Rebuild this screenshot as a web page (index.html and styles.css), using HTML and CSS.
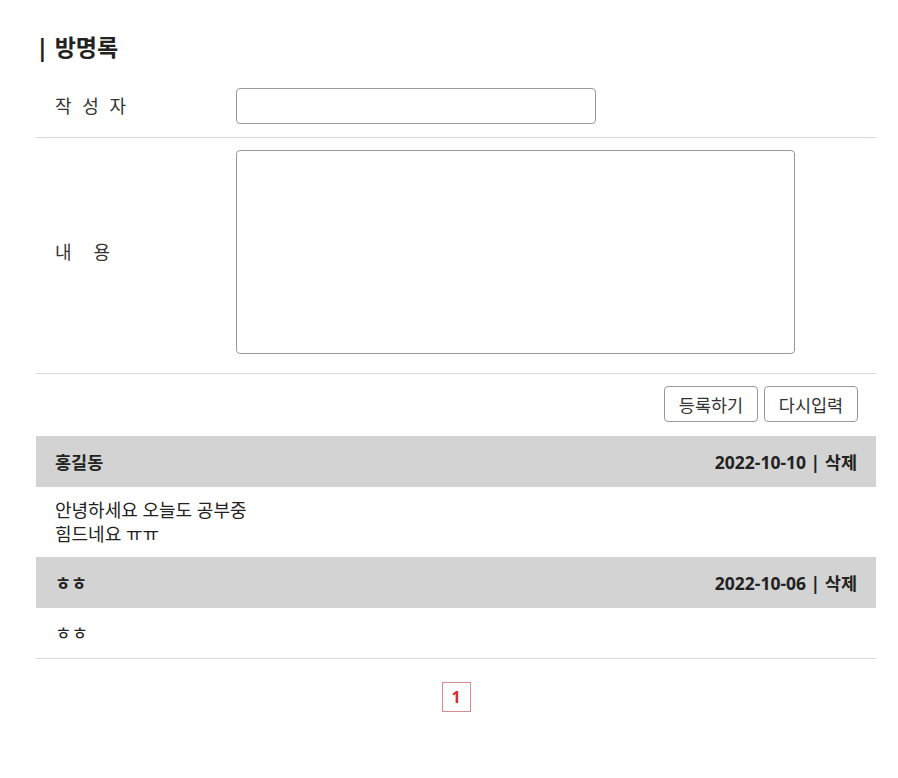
FILE: index.html
```html
<!DOCTYPE html>
<html lang="ko">
<head>
<meta charset="utf-8">
<title>방명록</title>
<link rel="stylesheet" href="styles.css">
</head>
<body>
<div class="wrap">
  <h2 class="title">| 방명록</h2>
  <form class="form">
    <div class="row row-name">
      <label class="label label-name">작 성 자</label>
      <input class="input" type="text">
    </div>
    <div class="row row-content">
      <label class="label label-content">내&nbsp;&nbsp;&nbsp;용</label>
      <textarea class="textarea"></textarea>
    </div>
    <div class="actions">
      <button type="button" class="btn">등록하기</button>
      <button type="reset" class="btn">다시입력</button>
    </div>
  </form>
  <div class="list">
    <div class="entry">
      <div class="entry-head">
        <span class="writer">홍길동</span>
        <span class="meta">2022-10-10 | 삭제</span>
      </div>
      <div class="entry-body">안녕하세요 오늘도 공부중<br>힘드네요 ㅠㅠ</div>
    </div>
    <div class="entry">
      <div class="entry-head">
        <span class="writer">ㅎㅎ</span>
        <span class="meta">2022-10-06 | 삭제</span>
      </div>
      <div class="entry-body entry-body-last">ㅎㅎ</div>
    </div>
  </div>
  <div class="paging">
    <span class="page current">1</span>
  </div>
</div>
</body>
</html>
```

FILE: styles.css
```css
* { box-sizing: border-box; }
html, body { margin: 0; padding: 0; background: #fff; }
body {
  font-family: "Noto Sans", "Noto Sans CJK KR", sans-serif;
  font-size: 18px;
  color: #222;
}
.wrap {
  width: 840px;
  margin-left: 36px;
  padding-top: 32px;
}
.title {
  margin: 0;
  font-size: 23px;
  font-weight: bold;
  line-height: 30px;
  color: #222;
}
.form { margin-top: 13px; }
.row {
  display: flex;
  align-items: center;
  border-bottom: 1px solid #d5d9de;
}
.row-name { padding: 13px 0 13px; }
.row-content { padding: 12px 0 19px; }
.label {
  width: 200px;
  padding-left: 19px;
  color: #333;
  line-height: 24px;
  font-size: 18px;
}
.label-name { letter-spacing: 3px; }
.label-content { letter-spacing: 2px; }
.input {
  display: block;
  width: 360px;
  height: 36px;
  border: 1px solid #999;
  border-radius: 4px;
  font-size: 16px;
}
.textarea {
  display: block;
  width: 559px;
  height: 204px;
  border: 1px solid #999;
  border-radius: 4px;
  resize: none;
  font-size: 16px;
}
.actions {
  display: flex;
  justify-content: flex-end;
  gap: 6px;
  padding: 12px 18px 14px 0;
}
.btn {
  width: 94px;
  height: 36px;
  border: 1px solid #999;
  border-radius: 4px;
  background: #fff;
  color: #333;
  font-family: "Noto Sans CJK KR", sans-serif;
  font-size: 17.5px;
  padding: 0;
}
.entry-head {
  display: flex;
  justify-content: space-between;
  align-items: center;
  height: 51px;
  padding: 0 19px;
  background: #d3d3d3;
  font-size: 17.5px;
  font-weight: bold;
  color: #222;
}
.writer { font-weight: 600; }
.entry-body {
  padding: 11px 19px;
  line-height: 24px;
  color: #222;
}
.entry-body-last {
  padding: 13px 19px;
  border-bottom: 1px solid #d5d9de;
}
.paging {
  display: flex;
  justify-content: center;
  margin-top: 23px;
}
.page {
  display: flex;
  align-items: center;
  justify-content: center;
  width: 29px;
  height: 30px;
  border: 1px solid #d98a8a;
  color: #d0312d;
  font-weight: bold;
  font-size: 16px;
}
```
